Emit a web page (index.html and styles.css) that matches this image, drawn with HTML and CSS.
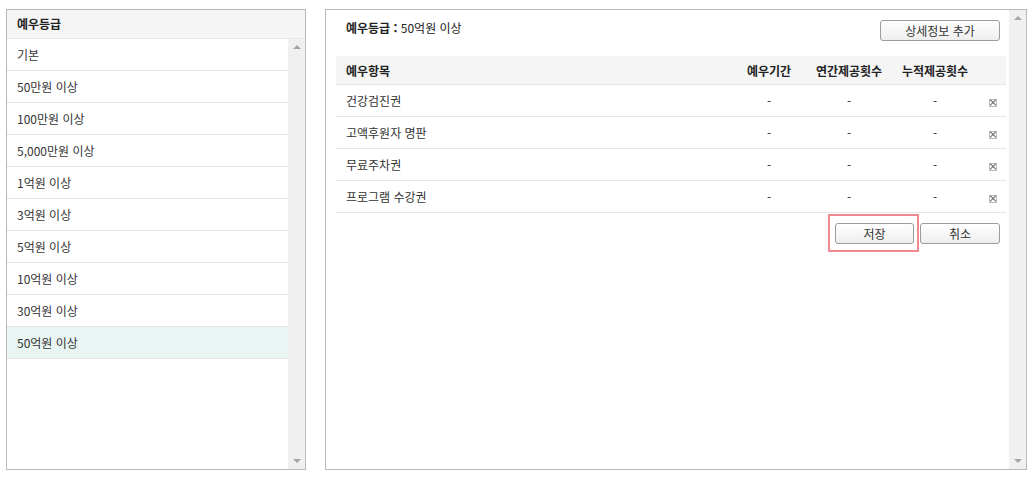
FILE: index.html
```html
<!DOCTYPE html>
<html lang="ko">
<head>
    <meta charset="UTF-8">
    <title>예우등급 관리</title>
    <link rel="stylesheet" href="styles.css">
</head>
<body>

<div class="wrap">
    <div class="panel grade-panel">
        <div class="grade-head">예우등급</div>
        <div class="grade-body">
            <ul class="grade-list">
                <li>기본</li>
                <li>50만원 이상</li>
                <li>100만원 이상</li>
                <li>5,000만원 이상</li>
                <li>1억원 이상</li>
                <li>3억원 이상</li>
                <li>5억원 이상</li>
                <li>10억원 이상</li>
                <li>30억원 이상</li>
                <li class="selected">50억원 이상</li>
            </ul>
            <div class="scrollbar">
                <span class="arrow up"></span>
                <span class="arrow down"></span>
            </div>
        </div>
    </div>

    <div class="panel detail-panel">
        <div class="detail-body">
            <div class="detail-head">
                <div class="detail-title"><b>예우등급 :</b> 50억원 이상</div>
                <button type="button" class="btn btn-add">상세정보 추가</button>
            </div>

            <table class="benefit-table">
                <thead>
                    <tr>
                        <th class="col-name">예우항목</th>
                        <th class="col-period">예우기간</th>
                        <th class="col-year">연간제공횟수</th>
                        <th class="col-total">누적제공횟수</th>
                        <th class="col-del"></th>
                    </tr>
                </thead>
                <tbody>
                    <tr>
                        <td class="col-name">건강검진권</td>
                        <td class="col-period">-</td>
                        <td class="col-year">-</td>
                        <td class="col-total">-</td>
                        <td class="col-del"><span class="del-icon"></span></td>
                    </tr>
                    <tr>
                        <td class="col-name">고액후원자 명판</td>
                        <td class="col-period">-</td>
                        <td class="col-year">-</td>
                        <td class="col-total">-</td>
                        <td class="col-del"><span class="del-icon"></span></td>
                    </tr>
                    <tr>
                        <td class="col-name">무료주차권</td>
                        <td class="col-period">-</td>
                        <td class="col-year">-</td>
                        <td class="col-total">-</td>
                        <td class="col-del"><span class="del-icon"></span></td>
                    </tr>
                    <tr>
                        <td class="col-name">프로그램 수강권</td>
                        <td class="col-period">-</td>
                        <td class="col-year">-</td>
                        <td class="col-total">-</td>
                        <td class="col-del"><span class="del-icon"></span></td>
                    </tr>
                </tbody>
            </table>

            <div class="actions">
                <span class="highlight">
                    <button type="button" class="btn btn-save">저장</button>
                </span>
                <button type="button" class="btn btn-cancel">취소</button>
            </div>
        </div>
        <div class="scrollbar">
            <span class="arrow up"></span>
            <span class="arrow down"></span>
        </div>
    </div>
</div>

</body>
</html>
```

FILE: styles.css
```css
body {
    margin: 0;
    font-family: "Noto Sans CJK KR", "Noto Sans", sans-serif;
    font-size: 12px;
    color: #333;
    background-color: #fff;
}
.wrap {
    display: flex;
    gap: 19px;
    padding: 9px 0 0 6px;
}
.panel {
    border: 1px solid #b9b9b9;
    height: 459px;
    background-color: #fff;
}

/* left: grade list */
.grade-panel {
    width: 298px;
    display: flex;
    flex-direction: column;
}
.grade-head {
    height: 28px;
    line-height: 28px;
    padding-left: 10px;
    background-color: #f5f5f5;
    border-bottom: 1px solid #e6e6e6;
    font-weight: bold;
    color: #222;
}
.grade-body {
    flex: 1;
    display: flex;
}
.grade-list {
    flex: 1;
    list-style: none;
    margin: 0;
    padding: 0;
}
.grade-list li {
    height: 31px;
    line-height: 32px;
    padding-left: 10px;
    border-bottom: 1px solid #e6e6e6;
}
.grade-list li.selected {
    background-color: #e8f5f2;
}

/* fake scrollbar */
.scrollbar {
    width: 17px;
    flex-shrink: 0;
    background-color: #f0f0f0;
    display: flex;
    flex-direction: column;
    justify-content: space-between;
    align-items: center;
    padding: 6px 0;
}
.arrow {
    width: 0;
    height: 0;
    border-left: 4px solid transparent;
    border-right: 4px solid transparent;
}
.arrow.up {
    border-bottom: 4px solid #a6a6a6;
}
.arrow.down {
    border-top: 4px solid #a6a6a6;
}

/* right: detail */
.detail-panel {
    width: 700px;
    display: flex;
}
.detail-body {
    flex: 1;
    min-width: 0;
    padding: 0 2px 0 10px;
}
.detail-head {
    height: 46px;
    display: flex;
    justify-content: space-between;
    align-items: flex-start;
    padding: 0 7px 0 10px;
}
.detail-title {
    margin-top: 9px;
    line-height: 18px;
    color: #222;
}
.detail-title b {
    font-weight: bold;
}

.btn {
    font-family: inherit;
    font-size: 12px;
    color: #333;
    height: 21px;
    padding: 0;
    border: 1px solid #9c9c9c;
    border-radius: 3px;
    background: linear-gradient(#ffffff, #eeeeee);
    cursor: pointer;
}
.btn-add {
    width: 120px;
    margin-top: 10px;
}
.btn-save {
    width: 79px;
    display: block;
}
.btn-cancel {
    width: 80px;
}

.benefit-table {
    width: 670px;
    border-collapse: collapse;
    table-layout: fixed;
}
.benefit-table th {
    height: 28px;
    background-color: #f5f5f5;
    border-bottom: 1px solid #e6e6e6;
    font-weight: bold;
    color: #222;
    padding: 0;
}
.benefit-table td {
    height: 31px;
    border-bottom: 1px solid #e6e6e6;
    padding: 0;
}
.benefit-table .col-name {
    width: 391px;
    padding-left: 10px;
    text-align: left;
}
.benefit-table .col-period {
    width: 64px;
    text-align: center;
}
.benefit-table .col-year {
    width: 96px;
    text-align: center;
}
.benefit-table .col-total {
    width: 76px;
    text-align: center;
}
.benefit-table .col-del {
    width: 33px;
    text-align: left;
}
.del-icon {
    display: inline-block;
    position: relative;
    width: 6px;
    height: 6px;
    border: 1px solid #bdbdbd;
    vertical-align: middle;
    margin-left: 16px;
}
.del-icon::before,
.del-icon::after {
    content: "";
    position: absolute;
    left: -1px;
    top: 2px;
    width: 8px;
    height: 1px;
    background-color: #666;
    transform: rotate(45deg);
}
.del-icon::after {
    transform: rotate(-45deg);
}

.actions {
    display: flex;
    justify-content: flex-end;
    gap: 6px;
    padding: 10px 7px 0 0;
}
.highlight {
    position: relative;
    display: block;
}
.highlight::after {
    content: "";
    position: absolute;
    left: -7px;
    right: -5px;
    top: -9px;
    bottom: -8px;
    border: 2px solid #ef8a90;
}
```
